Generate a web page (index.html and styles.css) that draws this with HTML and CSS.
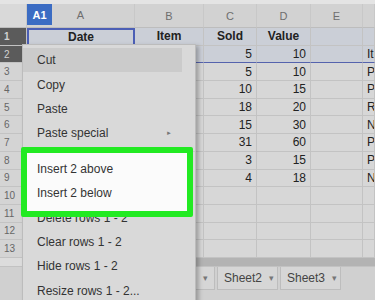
FILE: index.html
```html
<!DOCTYPE html>
<html lang="en">
<head>
    <meta charset="UTF-8">
    <meta name="viewport" content="width=device-width, initial-scale=1.0">
    <title>Sheet - Insert rows</title>
    <link rel="stylesheet" href="styles.css">
</head>
<body>
    <div class="sheet">
        <div class="toolbar"></div>

        <!-- column headers -->
        <div class="row head">
            <div class="cell corner"></div>
            <div class="cell col-a">
                <span class="namebox">A1</span>
                <span class="letter">A</span>
                <span class="spacer"></span>
            </div>
            <div class="cell">B</div>
            <div class="cell">C</div>
            <div class="cell">D</div>
            <div class="cell">E</div>
            <div class="cell"></div>
        </div>

        <!-- rows 1 and 2 are selected -->
        <div class="row sel title">
            <div class="cell num dark">1</div>
            <div class="cell center active">Date</div>
            <div class="cell center">Item</div>
            <div class="cell center">Sold</div>
            <div class="cell center">Value</div>
            <div class="cell"></div>
            <div class="cell"></div>
        </div>
        <div class="row sel last">
            <div class="cell num dark">2</div>
            <div class="cell"></div>
            <div class="cell"></div>
            <div class="cell right">5</div>
            <div class="cell right">10</div>
            <div class="cell"></div>
            <div class="cell">Item</div>
        </div>
        <div class="row">
            <div class="cell num">3</div>
            <div class="cell"></div>
            <div class="cell"></div>
            <div class="cell right">5</div>
            <div class="cell right">10</div>
            <div class="cell"></div>
            <div class="cell">Pens</div>
        </div>
        <div class="row">
            <div class="cell num">4</div>
            <div class="cell"></div>
            <div class="cell"></div>
            <div class="cell right">10</div>
            <div class="cell right">15</div>
            <div class="cell"></div>
            <div class="cell">Pencils</div>
        </div>
        <div class="row">
            <div class="cell num">5</div>
            <div class="cell"></div>
            <div class="cell"></div>
            <div class="cell right">18</div>
            <div class="cell right">20</div>
            <div class="cell"></div>
            <div class="cell">Rulers</div>
        </div>
        <div class="row">
            <div class="cell num">6</div>
            <div class="cell"></div>
            <div class="cell"></div>
            <div class="cell right">15</div>
            <div class="cell right">30</div>
            <div class="cell"></div>
            <div class="cell">Notebooks</div>
        </div>
        <div class="row">
            <div class="cell num">7</div>
            <div class="cell"></div>
            <div class="cell"></div>
            <div class="cell right">31</div>
            <div class="cell right">60</div>
            <div class="cell"></div>
            <div class="cell">Pens</div>
        </div>
        <div class="row">
            <div class="cell num">8</div>
            <div class="cell"></div>
            <div class="cell"></div>
            <div class="cell right">3</div>
            <div class="cell right">15</div>
            <div class="cell"></div>
            <div class="cell">Pencils</div>
        </div>
        <div class="row">
            <div class="cell num">9</div>
            <div class="cell"></div>
            <div class="cell"></div>
            <div class="cell right">4</div>
            <div class="cell right">18</div>
            <div class="cell"></div>
            <div class="cell">Notebooks</div>
        </div>
        <div class="row">
            <div class="cell num">10</div>
            <div class="cell"></div><div class="cell"></div><div class="cell"></div>
            <div class="cell"></div><div class="cell"></div><div class="cell"></div>
        </div>
        <div class="row">
            <div class="cell num">11</div>
            <div class="cell"></div><div class="cell"></div><div class="cell"></div>
            <div class="cell"></div><div class="cell"></div><div class="cell"></div>
        </div>
        <div class="row">
            <div class="cell num">12</div>
            <div class="cell"></div><div class="cell"></div><div class="cell"></div>
            <div class="cell"></div><div class="cell"></div><div class="cell"></div>
        </div>
        <div class="row">
            <div class="cell num">13</div>
            <div class="cell"></div><div class="cell"></div><div class="cell"></div>
            <div class="cell"></div><div class="cell"></div><div class="cell"></div>
        </div>

        <!-- horizontal scrollbar -->
        <div class="hscroll">
            <div class="hscroll-left"></div>
            <div class="hscroll-track"></div>
        </div>

        <!-- sheet tabs, the first one sits under the menu -->
        <div class="tabs">
            <div class="tab first"><span class="caret">&#9662;</span></div>
            <div class="tab">Sheet2 <span class="caret">&#9662;</span></div>
            <div class="tab">Sheet3 <span class="caret">&#9662;</span></div>
        </div>

        <!-- right click menu for rows 1 - 2 -->
        <div class="menu">
            <div class="item hover">Cut</div>
            <div class="item">Copy</div>
            <div class="item">Paste</div>
            <div class="item">Paste special <span class="arrow">&#9658;</span></div>
            <div class="sep"></div>
            <div class="group">
                <div class="item">Insert 2 above</div>
                <div class="item">Insert 2 below</div>
            </div>
            <div class="item">Delete rows 1 - 2</div>
            <div class="item">Clear rows 1 - 2</div>
            <div class="item">Hide rows 1 - 2</div>
            <div class="item">Resize rows 1 - 2...</div>

            <!-- green highlight frame -->
            <div class="highlight"></div>
        </div>
    </div>
</body>
</html>
```

FILE: styles.css
```css
/* Reset */
* {
    margin: 0;
    padding: 0;
    box-sizing: border-box;
}

body {
    font-family: "Liberation Sans", Arial, sans-serif;
    background-color: #d7d7d7;
    overflow: hidden;
}

.sheet {
    position: relative;
    width: 375px;
    height: 300px;
    overflow: hidden;
    color: #222;
}

.toolbar {
    height: 4px;
    background-color: #e4e4e4;
}

/* grid rows */
.row {
    display: grid;
    grid-template-columns: 27px 108px 69px 53px 54px 52px 1fr;
    height: 17.7px;
    font-size: 12px;
}

.cell {
    border-right: 1px solid #c3c3c3;
    border-bottom: 1px solid #c3c3c3;
    padding: 0 4px;
    display: flex;
    align-items: center;
    white-space: nowrap;
    overflow: hidden;
}

.center {
    justify-content: center;
}

.right {
    justify-content: flex-end;
}

.row.head {
    height: 24px;
    background-color: #d2d2d2;
    color: #6e6e6e;
    font-size: 11px;
}

.row.head .cell {
    justify-content: center;
    border-right-color: #c8c8c8;
    border-bottom-color: #bdbdbd;
}

.row.head .corner {
    background-color: #d9d9d9;
}

.row.head .col-a {
    padding: 0 0 2px 0;
    justify-content: space-between;
    align-items: stretch;
}

.namebox {
    width: 25px;
    background-color: #3b6cc3;
    color: #fff;
    font-weight: bold;
    font-size: 11px;
    display: flex;
    align-items: center;
    justify-content: center;
}

.letter {
    display: flex;
    align-items: center;
}

.spacer {
    width: 25px;
}

/* row numbers */
.num {
    background-color: #d4d4d4;
    color: #666;
    font-size: 10px;
    padding-left: 4px;
}

.num.dark {
    background-color: #5b5b5b;
    color: #d2d2d2;
}

/* selected rows */
.row.sel .cell:not(.num) {
    background-color: #cbcfd7;
}

.row.title {
    font-weight: bold;
}

.row.sel .active {
    background-color: #d8d8d8;
    border: 2px solid #4c5fb5;
}

.row.last .cell:not(.num) {
    border-bottom-color: #5563ad;
}

/* scrollbar and tabs */
.hscroll {
    display: flex;
    height: 8.5px;
}

.hscroll-left {
    width: 27px;
    background-color: #dcdcdc;
}

.hscroll-track {
    flex: 1;
    background-color: #b3b3b3;
}

.tabs {
    display: flex;
    gap: 2px;
    height: 40px;
    padding-left: 155px;
    background-color: #d0d0d0;
    border-top: 1px solid #c2c2c2;
}

.tab {
    width: 61px;
    height: 23px;
    padding-left: 6px;
    display: flex;
    align-items: center;
    gap: 7px;
    font-size: 12px;
    color: #444;
    background-color: #d6d6d6;
    border: 1px solid #bdbdbd;
    border-top: none;
}

.tab.first {
    width: 60px;
    justify-content: flex-end;
    padding-right: 6px;
}

.caret {
    font-size: 9px;
    color: #777;
}

/* context menu */
.menu {
    position: absolute;
    left: 22px;
    top: 44px;
    width: 174px;
    height: 270px;
    padding-top: 3px;
    background-color: #d9d9d9;
    border: 1px solid #bcbcbc;
    box-shadow: 3px 2px 4px rgba(0, 0, 0, 0.25);
    color: #333;
    font-size: 12px;
}

.item {
    height: 24.4px;
    margin-right: 13px;
    padding: 0 10px 0 14px;
    display: flex;
    align-items: center;
    justify-content: space-between;
    white-space: nowrap;
}

.item.hover {
    background-color: #cbcbcb;
}

.arrow {
    font-size: 6px;
    color: #777;
}

.sep {
    margin: 5px 0;
    border-top: 1px solid #c8c8c8;
}

.group {
    margin: -4px 8px -6px 4px;
    padding: 4px 0 6px;
    background-color: #fbfbfb;
}

.group .item {
    margin-right: 0;
    padding-left: 10px;
    color: #333;
}

.highlight {
    position: absolute;
    left: -2px;
    top: 102px;
    width: 172px;
    height: 70px;
    border: 6px solid #22ea22;
    border-radius: 2px;
}
```
